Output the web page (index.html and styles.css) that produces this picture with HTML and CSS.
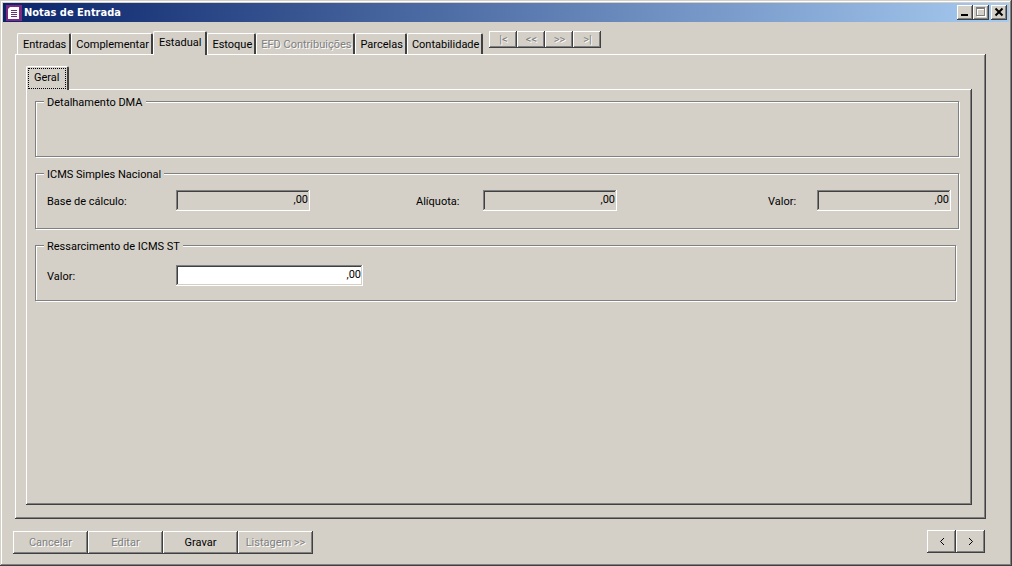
FILE: index.html
```html
<!DOCTYPE html>
<html lang="pt-BR">
<head>
<meta charset="utf-8">
<title>Notas de Entrada</title>
<link rel="stylesheet" href="styles.css">
</head>
<body>
<main class="window">
  <header class="titlebar">
    <svg class="app-icon" viewBox="0 0 16 16" width="16" height="16" aria-hidden="true">
      <rect width="16" height="16" fill="#7b2a80"/>
      <path d="M4 2h9v12H2V4z" fill="#fff"/>
      <path d="M5 5.500h6M5 7.500h6M5 9.500h6M5 11.500h6" stroke="#6b3070"/>
    </svg>
    <h1 class="title">Notas de Entrada</h1>
    <div class="caption-buttons">
      <button class="caption" type="button" aria-label="Minimizar"><svg width="12" height="10" viewBox="0 0 12 10"><path d="M2 7h7v2H2z"/></svg></button>
      <button class="caption" type="button" aria-label="Maximizar" disabled><svg width="12" height="10" viewBox="0 0 12 10"><path d="M2 1h9v9H2zM3 3v6h7V3z" fill="#fff" fill-rule="evenodd"/><path d="M1 0h9v9H1zM2 2v6h7V2z" fill="#808080" fill-rule="evenodd"/></svg></button>
      <button class="caption caption-close" type="button" aria-label="Fechar"><svg width="12" height="10" viewBox="0 0 12 10"><path d="M2.500 1.500l7 7M9.500 1.500l-7 7" stroke="#000" stroke-width="2"/></svg></button>
    </div>
  </header>

  <div class="client">
    <div class="tab-row">
      <div class="tabs" role="tablist">
        <button class="tab tab-first" type="button" role="tab">Entradas</button>
        <button class="tab" type="button" role="tab">Complementar</button>
        <button class="tab selected" type="button" role="tab" aria-selected="true">Estadual</button>
        <button class="tab" type="button" role="tab">Estoque</button>
        <button class="tab" type="button" role="tab" disabled>EFD Contribuições</button>
        <button class="tab" type="button" role="tab">Parcelas</button>
        <button class="tab" type="button" role="tab">Contabilidade</button>
      </div>
      <div class="record-nav">
        <button class="btn record" type="button" disabled>|&lt;</button>
        <button class="btn record" type="button" disabled>&lt;&lt;</button>
        <button class="btn record" type="button" disabled>&gt;&gt;</button>
        <button class="btn record" type="button" disabled>&gt;|</button>
      </div>
    </div>

    <section class="panel outer">
      <div class="tabs" role="tablist">
        <button class="tab selected focused" type="button" role="tab" aria-selected="true"><span class="focus">Geral</span></button>
      </div>
      <div class="panel inner">
        <fieldset class="group">
          <legend>Detalhamento DMA</legend>
        </fieldset>
        <fieldset class="group">
          <legend>ICMS Simples Nacional</legend>
          <div class="fields">
            <div class="field">
              <label class="label-wide" for="base">Base de cálculo:</label>
              <input class="box" id="base" type="text" value=",00" readonly>
            </div>
            <div class="field">
              <label class="label-mid" for="aliquota">Alíquota:</label>
              <input class="box" id="aliquota" type="text" value=",00" readonly>
            </div>
            <div class="field">
              <label class="label-short" for="valor">Valor:</label>
              <input class="box" id="valor" type="text" value=",00" readonly>
            </div>
          </div>
        </fieldset>
        <fieldset class="group group-last">
          <legend>Ressarcimento de ICMS ST</legend>
          <div class="field field-st">
            <label class="label-wide" for="valor-st">Valor:</label>
            <input class="box box-wide" id="valor-st" type="text" value=",00">
          </div>
        </fieldset>
      </div>
    </section>

    <footer class="footer">
      <div class="actions">
        <button class="btn action" type="button" disabled>Cancelar</button>
        <button class="btn action" type="button" disabled>Editar</button>
        <button class="btn action" type="button">Gravar</button>
        <button class="btn action" type="button" disabled>Listagem &gt;&gt;</button>
      </div>
      <div class="pager">
        <button class="btn page" type="button" aria-label="Anterior"><svg width="6" height="7" viewBox="0 0 6 7"><path d="M5 0L1.500 3.500L5 7" fill="none" stroke="#000"/></svg></button>
        <button class="btn page" type="button" aria-label="Próximo"><svg width="6" height="7" viewBox="0 0 6 7"><path d="M1 0L4.500 3.500L1 7" fill="none" stroke="#000"/></svg></button>
      </div>
    </footer>
  </div>
</main>
</body>
</html>
```
FILE: styles.css
```css
:root {
  --face: #d4d0c8;
  --shade: #808080;
  --dark: #404040;
}

* {
  box-sizing: border-box;
}

body {
  margin: 0;
  background: var(--face);
  font: 11px/13px Roboto, "Liberation Sans", sans-serif;
  color: #000;
}

button,
input {
  margin: 0;
  padding: 0;
  font: inherit;
  color: inherit;
  border-radius: 0;
}

button:disabled {
  color: var(--shade);
  text-shadow: 1px 1px 0 #fff;
}

.window {
  display: flex;
  flex-direction: column;
  min-height: 100vh;
  padding: 3px;
  box-shadow:
    inset -1px -1px var(--dark),
    inset 1px 1px var(--face),
    inset -2px -2px var(--shade),
    inset 2px 2px #fff;
}

.titlebar {
  display: flex;
  align-items: center;
  height: 19px;
  padding: 0 2px 0 3px;
  background: linear-gradient(to right, #0a246a, #a6caf0);
}

.title {
  flex: 1;
  margin: 0 0 0 2px;
  font: bold 11px/14px "DejaVu Sans Condensed", "DejaVu Sans", sans-serif;
  color: #fff;
}

.caption-buttons {
  display: flex;
}

.caption,
.btn {
  display: flex;
  align-items: center;
  justify-content: center;
  background: var(--face);
  border: 0;
  box-shadow:
    inset -1px -1px var(--dark),
    inset 1px 1px #fff,
    inset -2px -2px var(--shade);
}

.caption {
  width: 16px;
  height: 15px;
  padding: 0 1px 1px 0;
}

.caption-close {
  margin-left: 2px;
}

.client {
  flex: 1;
  display: flex;
  flex-direction: column;
  padding: 9px 23px 9px 12px;
}

.tab-row {
  display: flex;
  align-items: flex-start;
}

.tabs {
  display: flex;
  align-items: flex-end;
  height: 23px;
}

.tab {
  height: 21px;
  padding: 0 2px 0 4px;
  background: var(--face);
  border: 1px solid #fff;
  border-right: 2px solid var(--dark);
  border-bottom: 0;
  border-radius: 2px 2px 0 0;
  white-space: nowrap;
}

.tab-first {
  margin-left: 2px;
  padding: 0 3px 0 5px;
}

.tab.selected {
  position: relative;
  z-index: 1;
  height: 24px;
  margin-bottom: -1px;
  padding: 0 4px 3px 5px;
}

.tab.focused {
  padding: 0 1px 1px;
}

.focus {
  display: block;
  padding: 2px 5px 4px;
  border: 1px dotted #000;
}

.record-nav {
  display: flex;
  margin-left: 6px;
}

.record {
  width: 28px;
  height: 17px;
}

.panel {
  flex: 1;
  display: flex;
  flex-direction: column;
  box-shadow:
    inset -1px -1px var(--dark),
    inset 1px 1px #fff,
    inset -2px -2px var(--shade);
}

.outer {
  padding: 12px 14px 14px 11px;
}

.inner {
  gap: 8px;
  padding: 4px 13px 12px 9px;
}

.group {
  min-width: 0;
  min-height: 64px;
  margin: 0;
  padding: 0 7px 0 8px;
  border: 1px solid var(--shade);
  box-shadow: 1px 1px #fff, inset 1px 1px #fff;
}

.group legend {
  padding: 3px 3px 0;
  background: var(--face);
}

.group-last {
  margin-right: 3px;
}

.fields {
  display: grid;
  grid-template-columns: 369fr 352fr 183px;
  margin: 9px 0 0 3px;
}

.field {
  display: flex;
  align-items: center;
}

.field-st {
  margin: 12px 0 0 3px;
}

.field label {
  padding-top: 2px;
}

.label-wide {
  width: 129px;
}

.label-mid {
  width: 67px;
}

.label-short {
  width: 49px;
}

.box {
  width: 134px;
  height: 21px;
  padding: 0 2px 3px 3px;
  background: var(--face);
  border: 0;
  box-shadow:
    inset -1px -1px #fff,
    inset 1px 1px var(--shade),
    inset -2px -2px var(--face),
    inset 2px 2px var(--dark);
  text-align: right;
  outline: 0;
}

.box-wide {
  width: 187px;
  background: #fff;
}

.footer {
  display: flex;
  align-items: flex-start;
  justify-content: space-between;
  padding-top: 11px;
}

.actions {
  display: flex;
  padding-top: 1px;
  margin-left: -2px;
}

.action {
  width: 75px;
  height: 23px;
}

.pager {
  display: flex;
  margin-right: 1px;
}

.page {
  width: 29px;
  height: 23px;
}
```
